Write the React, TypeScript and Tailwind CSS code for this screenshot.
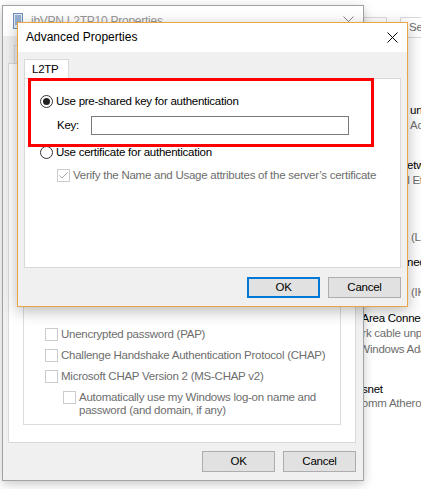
import type { ReactNode } from 'react'

const FONT = "font-['Liberation_Sans',Arial,sans-serif]"

function Radio({ checked }: { checked?: boolean }) {
  return (
    <span className="flex h-[13px] w-[13px] shrink-0 items-center justify-center rounded-full border border-[#333333] bg-white">
      {checked && <span className="h-[7px] w-[7px] rounded-full bg-[#222222]" />}
    </span>
  )
}

function Check({ checked }: { checked?: boolean }) {
  return (
    <span className="flex h-[13px] w-[13px] shrink-0 items-center justify-center border border-[#cccccc] bg-white">
      {checked && (
        <svg width="11" height="11" viewBox="0 0 11 11">
          <path d="M1.5 5.5 L4 8 L9.5 2.5" stroke="#a8a8a8" strokeWidth="1" fill="none" />
        </svg>
      )}
    </span>
  )
}

function CloseX({ color = '#000000' }: { color?: string }) {
  return (
    <svg width="11" height="11" viewBox="0 0 11 11">
      <path d="M0.5 0.5 L10.5 10.5 M10.5 0.5 L0.5 10.5" stroke={color} strokeWidth="1" />
    </svg>
  )
}

function Button({ children, focused }: { children: ReactNode; focused?: boolean }) {
  return (
    <div
      className={
        focused
          ? 'flex h-[21px] w-[73px] items-center justify-center border-2 border-[#0078d7] bg-[#e1e1e1] text-black'
          : 'flex h-[21px] w-[73px] items-center justify-center border border-[#adadad] bg-[#e1e1e1] text-black'
      }
    >
      {children}
    </div>
  )
}

// Network Connections window at the back, only a strip on the right shows
const NET_LINES = [
  { text: 'unidentified network', cls: 'mt-[66px] pl-[110px] text-black' },
  { text: 'Actiontec Wireless', cls: 'mt-[2px] pl-[110px] text-[#6d6d6d]' },
  { text: 'Network 3', cls: 'mt-[27px] pl-[99px] text-black' },
  { text: 'Intel Ethernet', cls: 'mt-[2px] pl-[89px] text-[#6d6d6d]' },
  { text: '(L2TP)', cls: 'mt-[44px] pl-[111px] text-[#6d6d6d]' },
  { text: 'nection', cls: 'mt-[12px] pl-[107px] text-black' },
  { text: '(IKEv2)', cls: 'mt-[17px] pl-[111px] text-[#6d6d6d]' },
  { text: 'Local Area Connection 2', cls: 'mt-[13px] pl-[33px] text-black' },
  { text: 'Network cable unplugged', cls: 'mt-[2px] pl-[31px] text-[#6d6d6d]' },
  { text: 'TAP-Windows Adapter V9', cls: 'mt-[3px] pl-[35px] text-[#6d6d6d]' },
  { text: 'snet', cls: 'mt-[27px] pl-[62px] text-black' },
  { text: 'Qualcomm Atheros', cls: 'mt-[1px] pl-[33px] text-[#6d6d6d]' },
]

function NetworkWindow() {
  return (
    <div className="absolute left-[300px] top-0 flex h-[489px] w-[121px] flex-col overflow-hidden bg-white">
      <div className="mt-[17px] flex h-[21px] items-stretch">
        <div className="ml-[50px] w-[37px] shrink-0 border border-[#d9d9d9]" />
        <div className="ml-[13px] flex w-[140px] shrink-0 items-center overflow-hidden whitespace-nowrap border border-[#d9d9d9] pl-[8px] text-[#6d6d6d]">
          Search Network Connections
        </div>
      </div>
      <div className="flex flex-col">
        {NET_LINES.map((l) => (
          <div key={l.text} className={`h-[13px] whitespace-nowrap ${l.cls}`}>
            {l.text}
          </div>
        ))}
      </div>
    </div>
  )
}

function PropertiesWindow() {
  return (
    <div className="absolute left-[2px] top-[5px] flex h-[476px] w-[362px] flex-col border border-[#a3a3a3] bg-[#f0f0f0] shadow-[0_3px_10px_rgba(0,0,0,0.22)]">
      <div className="flex h-[30px] shrink-0 items-center bg-white pl-[10px] pr-[9px]">
        <svg width="10" height="16" viewBox="0 0 10 16">
          <rect x="0.5" y="0.5" width="9" height="15" fill="#dfe8f3" stroke="#6d8fb8" />
          <path d="M2 3h6M2 5h6M2 7h6M2 9h6M2 11h6" stroke="#4f79ad" />
        </svg>
        <span className="ml-[8px] flex-1 text-[12px] text-[#999999]">ibVPN L2TP10 Properties</span>
        <CloseX color="#8a8a8a" />
      </div>
      <div className="flex flex-1 flex-col pl-[5px] pt-[9px]">
        <div className="flex h-[18px] pl-[6px]">
          {['General', 'Options', 'Security', 'Networking', 'Sharing'].map((t) => (
            <div key={t} className="border border-b-0 border-[#d9d9d9] bg-[#f0f0f0] px-[6px] pt-[2px]">
              {t}
            </div>
          ))}
        </div>
        <div className="flex h-[380px] w-[348px] flex-col justify-end border border-[#d9d9d9] bg-white px-[14px] pb-[17px]">
          <div className="flex flex-col border border-[#dcdcdc] pb-[7px] pl-[21px]">
            <div className="mt-[10px] flex items-center gap-[3px] text-[#6d6d6d]">
              <Radio checked /> Allow these protocols
            </div>
            <div className="mt-[30px] flex h-[13px] items-center gap-[3px] text-[#6d6d6d]">
              <Check /> Unencrypted password (PAP)
            </div>
            <div className="mt-[8px] flex h-[13px] items-center gap-[3px] text-[#6d6d6d]">
              <Check /> Challenge Handshake Authentication Protocol (CHAP)
            </div>
            <div className="mt-[8px] flex h-[13px] items-center gap-[3px] text-[#6d6d6d]">
              <Check /> Microsoft CHAP Version 2 (MS-CHAP v2)
            </div>
            <div className="ml-[18px] mt-[8px] flex items-start gap-[3px] text-[#6d6d6d]">
              <Check />
              <span>
                Automatically use my Windows log-on name and
                <br />
                password (and domain, if any)
              </span>
            </div>
          </div>
        </div>
        <div className="mt-[8px] flex justify-end gap-[8px] pr-[7px]">
          <Button>OK</Button>
          <Button>Cancel</Button>
        </div>
      </div>
    </div>
  )
}

function AdvancedDialog() {
  return (
    <div className="absolute left-[17px] top-[22px] flex h-[285px] w-[391px] flex-col border border-[#eaa646] bg-[#f0f0f0] shadow-[0_4px_14px_rgba(0,0,0,0.28)]">
      <div className="flex h-[29px] shrink-0 items-center justify-between bg-white pl-[8px] pr-[9px]">
        <span className="text-[12px] tracking-normal text-black">Advanced Properties</span>
        <CloseX />
      </div>
      <div className="flex flex-1 flex-col px-[6px] pt-[7px]">
        <div className="flex">
          <div className="h-[19px] w-[45px] border border-b-0 border-[#d9d9d9] bg-white pl-[7px] pt-[3px] text-black">
            L2TP
          </div>
        </div>
        <div className="relative flex h-[190px] flex-col border border-[#d9d9d9] bg-white pl-[15px] pt-[16px] text-black">
          <div className="flex h-[13px] items-center gap-[3px]">
            <Radio checked /> Use pre-shared key for authentication
          </div>
          <div className="ml-[17px] mt-[8px] flex h-[19px] items-center">
            <span className="w-[34px]">Key:</span>
            <div className="h-[19px] w-[258px] border border-[#7a7a7a] bg-white" />
          </div>
          <div className="mt-[11px] flex h-[13px] items-center gap-[3px]">
            <Radio /> Use certificate for authentication
          </div>
          <div className="ml-[17px] mt-[10px] flex h-[13px] items-center gap-[3px] text-[#6d6d6d]">
            <Check checked /> Verify the Name and Usage attributes of the server’s certificate
          </div>
          <div className="absolute left-[3px] top-[-1px] h-[69px] w-[346px] border-[3px] border-[#ff0000]" />
        </div>
        <div className="mt-[9px] flex justify-end gap-[8px]">
          <Button focused>OK</Button>
          <Button>Cancel</Button>
        </div>
      </div>
    </div>
  )
}

export default function App() {
  return (
    <div
      className={`relative h-[489px] w-[421px] overflow-hidden bg-white text-[11.5px] leading-[13px] tracking-[-0.25px] ${FONT}`}
    >
      <NetworkWindow />
      <PropertiesWindow />
      <AdvancedDialog />
    </div>
  )
}
